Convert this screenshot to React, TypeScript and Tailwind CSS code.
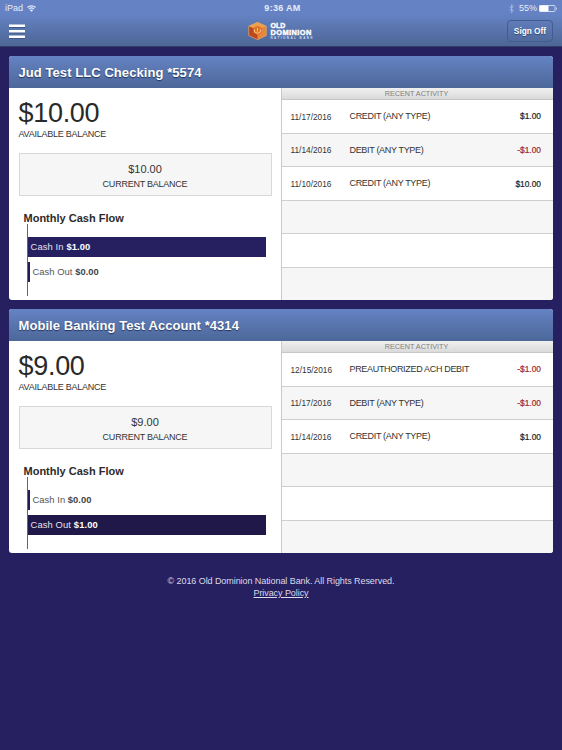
type Entry = { date: string; label: string; amount: string };

type Account = {
  name: string;
  balance: string;
  cashIn: string;
  cashOut: string;
  entries: Entry[];
};

const ACCOUNTS: Account[] = [
  {
    name: "Jud Test LLC Checking *5574",
    balance: "$10.00",
    cashIn: "$1.00",
    cashOut: "$0.00",
    entries: [
      { date: "11/17/2016", label: "CREDIT (ANY TYPE)", amount: "$1.00" },
      { date: "11/14/2016", label: "DEBIT (ANY TYPE)", amount: "-$1.00" },
      { date: "11/10/2016", label: "CREDIT (ANY TYPE)", amount: "$10.00" },
    ],
  },
  {
    name: "Mobile Banking Test Account *4314",
    balance: "$9.00",
    cashIn: "$0.00",
    cashOut: "$1.00",
    entries: [
      { date: "12/15/2016", label: "PREAUTHORIZED ACH DEBIT", amount: "-$1.00" },
      { date: "11/17/2016", label: "DEBIT (ANY TYPE)", amount: "-$1.00" },
      { date: "11/14/2016", label: "CREDIT (ANY TYPE)", amount: "$1.00" },
    ],
  },
];

const ROWS = [0, 1, 2, 3, 4, 5];

function StatusBar() {
  return (
    <div className="grid h-4 grid-cols-3 items-center pr-1 pl-[5px] text-[9px] leading-4 text-[#e6ecf8]">
      <div className="flex items-center gap-1">
        <span>iPad</span>
        <svg className="h-[7px] w-[9px]" viewBox="0 0 18 14" fill="none" stroke="currentColor" strokeWidth="2.4">
          <path d="M1 5a11.5 11.5 0 0 1 16 0M4 8.3a7.2 7.2 0 0 1 10 0" />
          <path d="M9 13.5 5.8 10.4a4.6 4.6 0 0 1 6.4 0z" fill="currentColor" stroke="none" />
        </svg>
      </div>
      <div className="pl-[2px] text-center font-bold tracking-[0.3px]">9:36 AM</div>
      <div className="flex items-center justify-end">
        <svg className="mr-[5px] h-[9px] w-[5px] opacity-50" viewBox="0 0 10 18" fill="none" stroke="currentColor" strokeWidth="1.8">
          <path d="m1 5 8 8-4 4V1l4 4-8 8" />
        </svg>
        <span>55%</span>
        <svg className="ml-[2px] h-[7px] w-[19px]" viewBox="0 0 19 7">
          <rect x="0.5" y="0.5" width="15.5" height="6" rx="0.8" fill="none" stroke="#e4eafa" strokeWidth="0.8" />
          <rect x="0.5" y="0.5" width="9" height="6" fill="#fff" />
          <path d="M17 2q1.6 1.5 0 3z" fill="#fff" />
        </svg>
      </div>
    </div>
  );
}

function Logo() {
  return (
    <div className="flex items-center gap-[3px] pl-[3px]">
      <svg className="h-[18px] w-[19px]" viewBox="0 0 19 18">
        <path d="M9.5.3 18.3 4.2 9.5 8.5.7 4.2z" fill="#f0a04b" />
        <path d="M.7 4.2 9.5 8.5v9.2L.7 13.5z" fill="#b9481f" />
        <path d="M18.3 4.2 9.5 8.5v9.2l8.8-4.2z" fill="#e8863a" />
        <path d="m9.5 3.8 4.2 2v4.9l-4.2 2.2-4.2-2.2V5.8z" fill="#dd7428" />
        <path d="M6.5 7.5v2.3l3 1.5 3-1.5V7.5M9.5 5.8v3.6" fill="none" stroke="#ffc98a" strokeWidth="0.9" />
        <path d="M9.5.3 18.3 4.2v9.3l-8.8 4.2-8.8-4.2V4.2z" fill="none" stroke="#f3b16b" strokeWidth="0.6" />
      </svg>
      <div className="flex w-[46px] flex-col font-['Liberation_Sans',Arial,sans-serif] font-bold text-white">
        <span className="text-[7px] leading-[7px] [-webkit-text-stroke:0.4px]">OLD</span>
        <span className="text-[7.4px] leading-[7px] tracking-[0.45px] [-webkit-text-stroke:0.4px]">DOMINION</span>
        <span className="text-[3px] leading-[4px] font-semibold tracking-[1.45px] whitespace-nowrap text-[#d3def4]">NATIONAL BANK</span>
      </div>
    </div>
  );
}

function CashBar({ label, amount, fill }: { label: string; amount: string; fill: string }) {
  if (amount === "$0.00") {
    return (
      <div className="flex h-5 items-center border-l-2 border-[#231d55] pt-px pl-[3px] text-[9.4px] tracking-[0.05px] text-[#555]">
        {label}&nbsp;<b className="text-[#444]">{amount}</b>
      </div>
    );
  }
  return (
    <div className={`flex h-5 items-center pt-px pl-[3px] text-[9.4px] tracking-[0.12px] text-[#e3e1f0] ${fill}`}>
      {label}&nbsp;<b className="text-white">{amount}</b>
    </div>
  );
}

function AccountCard({ account }: { account: Account }) {
  return (
    <section className="h-[244px] overflow-hidden rounded-[3px] bg-white">
      <h2 className="h-8 bg-linear-to-b from-[#6583c4] to-[#4c6798] pl-[9.5px] text-[13px] leading-[33px] font-bold tracking-[0.07px] text-white [text-shadow:0_1px_1px_#22335c]">
        {account.name}
      </h2>
      <div className="flex h-[212px]">
        <div className="w-[272px] pt-[9px] pr-[10px] pl-[9.5px]">
          <div className="text-[27px] leading-8 tracking-[-0.3px] text-[#2a2a2a]">{account.balance}</div>
          <div className="text-[9px] leading-[11px] tracking-[-0.24px] text-[#333]">AVAILABLE BALANCE</div>
          <div className="mt-[13px] h-[43px] w-[253px] border border-[#d8d8d8] bg-[#f6f6f6] pt-[8px] text-center text-[#333]">
            <div className="text-[11px] leading-[15px]">{account.balance}</div>
            <div className="text-[9px] leading-[15px] tracking-[-0.24px]">CURRENT BALANCE</div>
          </div>
          <h3 className="mt-[15px] pl-[5px] text-[11px] leading-[14px] font-bold text-[#2b2b2b]">Monthly Cash Flow</h3>
          <div className="-mt-px ml-2 flex h-[72px] w-[239px] flex-col gap-[5px] border-l border-[#666] pt-[13px]">
            <CashBar label="Cash In" amount={account.cashIn} fill="bg-[#262060]" />
            <CashBar label="Cash Out" amount={account.cashOut} fill="bg-[#1f1848]" />
          </div>
        </div>
        <div className="flex flex-1 flex-col border-l border-[#c9c9c9]">
          <div className="h-3 border-b border-[#c6c6c6] bg-linear-to-b from-[#f0f0f0] to-[#dadada] pr-[2px] text-center text-[7.2px] leading-[12px] text-[#808080]">
            RECENT ACTIVITY
          </div>
          {ROWS.map((i) => {
            const entry = account.entries[i];
            return (
              <div
                key={i}
                className="flex h-[33.6px] shrink-0 items-center border-b border-[#cfcfcf] pt-px pr-3 pl-[8.5px] text-[9px] text-[#333] even:bg-white odd:bg-[#f6f6f6]"
              >
                {entry && (
                  <>
                    <span className="w-[59px] text-[8.3px]">{entry.date}</span>
                    <span className="flex-1 tracking-[-0.32px]">{entry.label}</span>
                    <span className={`text-[8.4px] [-webkit-text-stroke:0.2px] ${entry.amount.startsWith("-") ? "text-[#a3272c]" : "text-[#222]"}`}>
                      {entry.amount}
                    </span>
                  </>
                )}
              </div>
            );
          })}
        </div>
      </div>
    </section>
  );
}

export default function App() {
  return (
    <div className="h-[750px] w-[562px] overflow-hidden bg-[#262060] font-['Liberation_Sans',Arial,sans-serif]">
      <header className="h-[47px] border-b border-[#333f60] bg-linear-to-b from-[#6583c4] from-30% to-[#4d6696]">
        <StatusBar />
        <div className="grid h-[30px] grid-cols-3 items-center pr-[9px] pl-[9px]">
          <button type="button" aria-label="Menu" className="w-4">
            <svg className="block h-[15px] w-4" viewBox="0 0 16 15">
              <path d="M0 2.8h16M0 8.3h16M0 13.8h16" stroke="#3f5687" strokeWidth="2.2" />
              <path d="M0 1.8h16M0 7.3h16M0 12.8h16" stroke="#fff" strokeWidth="2.5" />
            </svg>
          </button>
          <div className="flex justify-center">
            <Logo />
          </div>
          <button
            type="button"
            className="h-[22px] w-[46px] justify-self-end rounded-[4px] border border-[#435b8d] text-[8.3px] leading-5 font-bold text-white [text-shadow:0_1px_1px_#2f4370]"
          >
            Sign Off
          </button>
        </div>
      </header>
      <main className="flex flex-col gap-[9px] px-[9px] pt-[9px]">
        {ACCOUNTS.map((account) => (
          <AccountCard key={account.name} account={account} />
        ))}
      </main>
      <footer className="pt-[22px] text-center text-[9px] leading-3 tracking-[-0.07px] text-[#dcdaea]">
        <p>© 2016 Old Dominion National Bank. All Rights Reserved.</p>
        <a href="#" className="underline">
          Privacy Policy
        </a>
      </footer>
    </div>
  );
}
